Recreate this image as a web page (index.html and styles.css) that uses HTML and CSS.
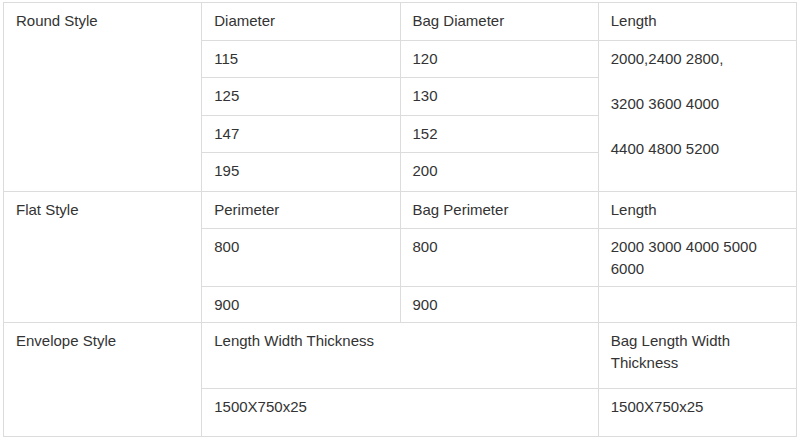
FILE: index.html
```html
<!DOCTYPE html>
<html>
<head>
<meta charset="utf-8">
<link rel="stylesheet" href="styles.css">
</head>
<body>
<table class="spec">
  <colgroup><col class="c"><col class="c"><col class="c"><col class="c"></colgroup>
  <tbody>
    <tr class="round-row">
      <td rowspan="5">Round Style</td>
      <td>Diameter</td>
      <td>Bag Diameter</td>
      <td>Length</td>
    </tr>
    <tr class="round-row">
      <td>115</td>
      <td>120</td>
      <td rowspan="4" class="tall-lines">2000,2400 2800,<br><br>3200 3600 4000<br><br>4400 4800 5200</td>
    </tr>
    <tr class="round-row"><td>125</td><td>130</td></tr>
    <tr class="round-row"><td>147</td><td>152</td></tr>
    <tr class="last-round"><td>195</td><td>200</td></tr>
    <tr class="flat-head">
      <td rowspan="3">Flat Style</td>
      <td>Perimeter</td>
      <td>Bag Perimeter</td>
      <td>Length</td>
    </tr>
    <tr>
      <td>800</td>
      <td>800</td>
      <td>2000 3000 4000 5000 6000</td>
    </tr>
    <tr>
      <td>900</td>
      <td>900</td>
      <td></td>
    </tr>
    <tr class="env-head">
      <td rowspan="2">Envelope Style</td>
      <td colspan="2">Length Width Thickness</td>
      <td>Bag Length Width Thickness</td>
    </tr>
    <tr class="env-row">
      <td colspan="2">1500X750x25</td>
      <td>1500X750x25</td>
    </tr>
  </tbody>
</table>
</body>
</html>
```

FILE: styles.css
```css
html, body {
  margin: 0;
  padding: 0;
  background: #ffffff;
}

body {
  padding: 2px 3px;
  font-family: "Liberation Sans", Arial, sans-serif;
  font-size: 15px;
  line-height: 22px;
  color: #333333;
}

.spec {
  width: 794px;
  border-collapse: collapse;
  table-layout: fixed;
}

.spec .c {
  width: 25%;
}

.spec td {
  border: 1px solid #dcdcdc;
  padding: 7px 12px 6px;
  vertical-align: top;
  text-align: left;
}

.spec .tall-lines {
  line-height: 22.5px;
}

.spec .round-row td {
  height: 23.5px;
}

.spec .last-round td {
  height: 25px;
}

.spec .flat-head td {
  height: 23px;
}

.spec .env-head td {
  height: 52px;
}

.spec .env-row td {
  height: 34px;
}
```
